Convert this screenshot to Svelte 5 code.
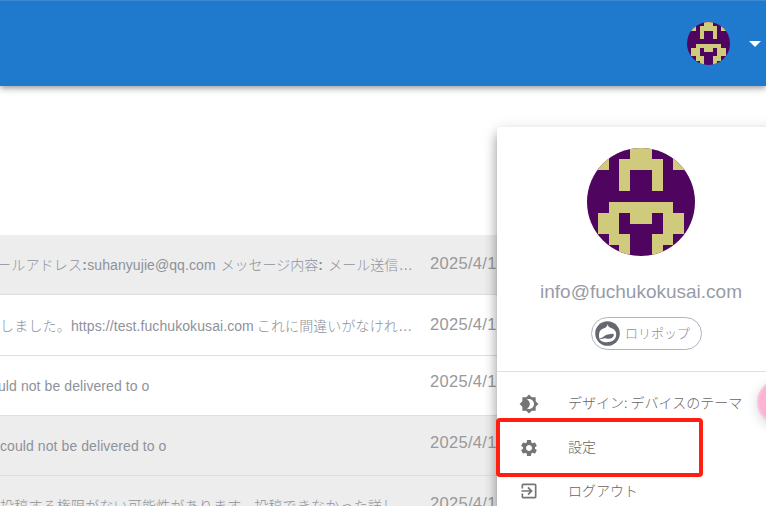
<script>
  const face = [
    '0000110000',
    '1101111011',
    '0001001000',
    '0001001000',
    '0000000000',
    '0011111100',
    '0110110110',
    '0110000110',
    '0011001100',
    '0001001000'
  ];
  const cells = face.flatMap((row, y) => [...row].map((v, x) => ({ x, y, on: v === '1' }))).filter((c) => c.on);

  const rows = [
    { kind: 'read', shift: 'a', date: '2025/4/1', parts: [['ールアドレス', 'jp lead'], [':', 'colon'], ['suhanyujie@qq.com', 'latin'], ['メッセージ内容', 'jp gap'], [':', 'colon'], ['メール送信', 'jp gap'], ['...', 'dots']] },
    { kind: 'unread', shift: 'a', date: '2025/4/1', parts: [['しました。', 'jp'], ['https://test.fuchukokusai.com', 'latin'], ['これに間違いがなけれ', 'jp near'], ['...', 'dots']] },
    { kind: 'unread', shift: 'b', date: '2025/4/1', parts: [['uld not be delivered to o', 'latin cut']] },
    { kind: 'read', shift: 'b', date: '2025/4/1', parts: [['could not be delivered to o', 'latin']] },
    { kind: 'read', shift: 'b', date: '2025/4/1', parts: [['投稿する権限がない可能性があります。投稿できなかった詳し', 'jp']] }
  ];

  const items = [
    { label: 'デザイン: デバイスのテーマ', cls: 'theme', d: 'M20 15.31L23.31 12 20 8.69V4h-4.69L12 .69 8.69 4H4v4.69L.69 12 4 15.31V20h4.69L12 23.31 15.31 20H20v-4.69zM12 18c-.89 0-1.74-.2-2.5-.55C11.56 16.5 13 14.42 13 12s-1.44-4.5-3.5-5.45C10.26 6.2 11.11 6 12 6c3.31 0 6 2.69 6 6s-2.69 6-6 6z' },
    { label: '設定', cls: 'settings', d: 'M19.14 12.94c.04-.3.06-.61.06-.94 0-.32-.02-.64-.07-.94l2.03-1.58c.18-.14.23-.41.12-.61l-1.92-3.32c-.12-.22-.37-.29-.59-.22l-2.39.96c-.5-.38-1.03-.7-1.62-.94l-.36-2.54c-.04-.24-.24-.41-.48-.41h-3.84c-.24 0-.43.17-.47.41l-.36 2.54c-.59.24-1.13.57-1.62.94l-2.39-.96c-.22-.08-.47 0-.59.22L2.74 8.87c-.12.21-.08.47.12.61l2.03 1.58c-.05.3-.09.63-.09.94s.02.64.07.94l-2.03 1.58c-.18.14-.23.41-.12.61l1.92 3.32c.12.22.37.29.59.22l2.39-.96c.5.38 1.03.7 1.62.94l.36 2.54c.05.24.24.41.48.41h3.84c.24 0 .44-.17.47-.41l.36-2.54c.59-.24 1.13-.56 1.62-.94l2.39.96c.22.08.47 0 .59-.22l1.92-3.32c.12-.22.07-.47-.12-.61l-2.01-1.58zM12 15.6c-1.98 0-3.6-1.62-3.6-3.6s1.62-3.6 3.6-3.6 3.6 1.62 3.6 3.6-1.62 3.6-3.6 3.6z' },
    { label: 'ログアウト', cls: 'logout', d: 'M10.09 15.59L11.5 17l5-5-5-5-1.41 1.41L12.67 11H3v2h9.67l-2.58 2.59zM19 3H5c-1.11 0-2 .9-2 2v4h2V5h14v14H5v-4H3v4c0 1.1.89 2 2 2h14c1.1 0 2-.9 2-2V5c0-1.1-.9-2-2-2z' }
  ];
</script>

{#snippet avatar(size)}
  <svg class="avatar" width={size} height={size} viewBox="0 0 10 10" shape-rendering="crispEdges">
    <rect width="10" height="10" fill="#4f0560" />
    {#each cells as c}
      <rect x={c.x} y={c.y} width="1" height="1" fill="#d0ca7c" />
    {/each}
  </svg>
{/snippet}

<div class="page">
  <header>
    {@render avatar(43)}
    <svg class="caret" width="12" height="6" viewBox="0 0 12 6"><path d="M0 0h12L6 6z" fill="#fff" /></svg>
  </header>

  <main>
    {#each rows as row}
      <div class="row {row.kind} {row.shift}">
        <div class="snippet">
          {#each row.parts as [text, cls]}<span class={cls}>{text}</span>{/each}
        </div>
        <time>{row.date}</time>
      </div>
    {/each}
  </main>

  <aside>
    <div class="profile">
      {@render avatar(108)}
      <div class="email">info@fuchukokusai.com</div>
      <div class="pill">
        <svg width="25" height="25" viewBox="0 0 25 25">
          <circle cx="12.5" cy="12.5" r="12.3" fill="#666871" />
          <path d="M12.7 3.2C12.8 5.2 14 6.2 16.4 7.1C19.8 8.4 21.5 10.8 21.2 14C20.8 18.8 16.7 21.2 12 21.2C8 21.1 4.8 19.6 4.4 17.4C3.8 15 3.9 13.2 4.4 11.2C5.1 8.9 7.3 7.7 9.5 7C11.3 6.3 12 5.2 12.7 3.2Z" fill="#fff" />
          <path d="M4.6 17.4C7 17 8.6 16 9.8 14.8C11.4 12.9 14 13.6 16 12.9C17.8 12.2 19.4 13 18.8 14.6C17.9 17.3 14.5 18.6 11.3 17.4C8.8 16.8 7 18 4.9 18.2Z" fill="#666871" />
        </svg>
        <span>ロリポップ</span>
      </div>
    </div>
    <nav>
      {#each items as item}
        <div class="item {item.cls}">
          <svg width="20" height="20" viewBox="0 0 24 24"><path d={item.d} fill="#757575" /></svg>
          <span>{item.label}</span>
        </div>
      {/each}
    </nav>
  </aside>
  <div class="highlight"></div>
  <div class="bubble"></div>
</div>

<style>
  .page {
    position: relative;
    width: 766px;
    height: 506px;
    overflow: hidden;
    background: #fff;
    font-family: "Liberation Sans", "Noto Sans CJK JP", sans-serif;
  }
  header {
    box-sizing: border-box;
    display: flex;
    align-items: center;
    justify-content: flex-end;
    gap: 19px;
    height: 86px;
    padding-right: 5px;
    border-top: 1px solid #3d8ad1;
    background: #1f7acd;
    box-shadow: 0 2px 4px -1px rgba(0, 0, 0, .2), 0 4px 5px rgba(0, 0, 0, .14), 0 1px 10px rgba(0, 0, 0, .12);
  }
  .avatar { display: block; border-radius: 50%; }
  .caret { display: block; }
  main { padding-top: 149px; }
  .row {
    box-sizing: border-box;
    display: flex;
    height: 60px;
    border-bottom: 1px solid #dedfe1;
    white-space: nowrap;
  }
  .row:nth-child(2) { height: 61px; }
  .read { background: #ededed; }
  .snippet {
    display: flex;
    flex: none;
    width: 430px;
    line-height: 60px;
    font-size: 14px;
    color: #8d929b;
  }
  .row:nth-child(2) .snippet { line-height: 62px; }
  .jp {
    font-family: "Noto Sans CJK JP", sans-serif;
    font-weight: 300;
    line-height: 58px;
    letter-spacing: .2px;
  }
  .row:nth-child(2) .jp { line-height: 60px; }
  .lead { margin-left: -3px; }
  .gap { margin-left: 5px; letter-spacing: 0; }
  .near { margin-left: 3px; letter-spacing: .1px; }
  .colon { width: 5px; font-weight: 700; }
  .latin { letter-spacing: .08px; }
  .cut { margin-left: -2px; }
  .dots { letter-spacing: .6px; margin-left: 1px; }
  time {
    line-height: 57px;
    font-size: 16.5px;
    letter-spacing: .3px;
    color: #999;
  }
  .row:nth-child(2) time { line-height: 59px; }
  .row:nth-child(3) time { line-height: 50px; }
  .row:nth-child(4) time { line-height: 52px; }
  .row:nth-child(5) time { line-height: 55px; }
  aside {
    position: absolute;
    left: 497px;
    top: 127px;
    width: 288px;
    height: 420px;
    border-radius: 4px;
    background: #fff;
    box-shadow: 0 5px 5px -3px rgba(0, 0, 0, .2), 0 8px 10px 1px rgba(0, 0, 0, .14), 0 3px 14px 2px rgba(0, 0, 0, .12), 0 10px 14px rgba(0, 0, 0, .14);
  }
  .profile {
    box-sizing: border-box;
    display: flex;
    flex-direction: column;
    align-items: center;
    height: 245px;
    padding-top: 21px;
    border-bottom: 1px solid #dfdfdf;
  }
  .email {
    margin-top: 25px;
    line-height: 22px;
    font-size: 19px;
    color: #989ca7;
  }
  .pill {
    box-sizing: border-box;
    display: flex;
    align-items: center;
    gap: 5px;
    width: 111px;
    height: 33px;
    margin: 14px 0 0 11px;
    padding-left: 3px;
    border: 1px solid #b0b3bd;
    border-radius: 17px;
    font-family: "Noto Sans CJK JP", sans-serif;
    font-weight: 300;
    font-size: 13px;
    color: #8b8f9a;
  }
  .pill span { padding-bottom: 2px; }
  nav { padding-top: 10px; }
  .item {
    display: flex;
    align-items: center;
    gap: 29px;
    height: 43px;
    padding-left: 22px;
    font-family: "Noto Sans CJK JP", sans-serif;
    font-weight: 300;
    font-size: 14px;
    color: #666;
    white-space: nowrap;
  }
  .item span { padding-bottom: 3px; }
  .settings { height: 45px; }
  .logout { height: 42px; }
  .highlight {
    position: absolute;
    box-sizing: border-box;
    left: 496px;
    top: 418px;
    width: 207px;
    height: 59px;
    border: 4px solid #ff1e10;
    border-radius: 4px;
  }
  .bubble {
    position: absolute;
    box-sizing: border-box;
    left: 757px;
    top: 379px;
    width: 46px;
    height: 46px;
    border: 2px solid #fac5dc;
    border-radius: 50%;
    background: #ffb3d4;
    box-shadow: 0 3px 12px rgba(0, 0, 0, .15);
  }
</style>
